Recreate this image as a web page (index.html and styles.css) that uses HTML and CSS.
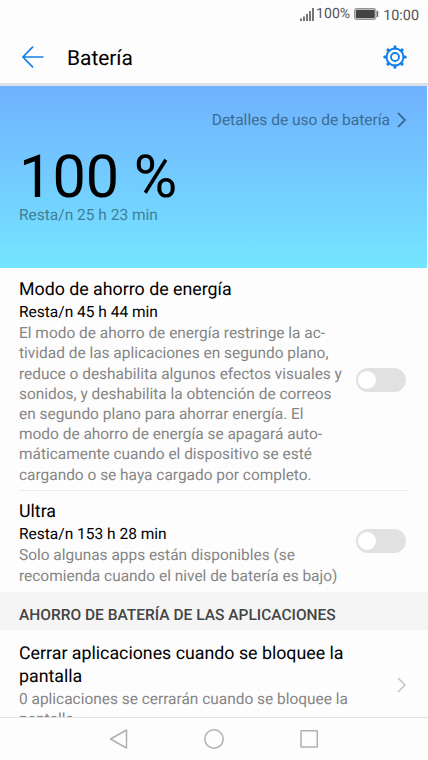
FILE: index.html
```html
<!DOCTYPE html>
<html lang="es">
  <head>
    <meta charset="UTF-8" />
    <meta name="viewport" content="width=device-width, initial-scale=1.0" />
    <title>Batería</title>
    <link rel="stylesheet" href="styles.css">
  </head>
  <body>
    <div class="phone">
      <div class="status-bar">
        <svg class="signal" width="14" height="13" viewBox="0 0 14 13" stroke="#555" stroke-width="1.6">
          <path d="M1 10.5V13M4 8.5V13M7 6V13M10 3V13M13 0V13" />
        </svg>
        <span class="percent">100%</span>
        <svg class="battery" width="25" height="12" viewBox="0 0 25 12">
          <rect x="0.6" y="0.6" width="21.3" height="10.8" rx="1.6" fill="none" stroke="#888" />
          <rect x="1.7" y="1.7" width="19.1" height="8.6" fill="#444" />
          <rect x="22.7" y="3" width="1.5" height="6" rx="0.5" fill="#666" />
        </svg>
        <span class="clock">10:00</span>
      </div>

      <header class="header">
        <svg class="back" width="22" height="22" viewBox="0 0 22 22" fill="none" stroke="#147fe8" stroke-width="1.7">
          <path d="M21.5 11H1M11 .7L.9 11L11 21.3" />
        </svg>
        <h1>Batería</h1>
        <svg class="gear" width="24" height="24" viewBox="-12 -12 24 24" fill="none" stroke="#0f7fec">
          <circle r="8.5" stroke-width="1.9" />
          <circle r="4" stroke-width="1.8" />
          <path stroke-width="3" stroke-linecap="round" d="M0-9.1V-10.3M0 9.1V10.3M-9.1 0H-10.3M9.1 0H10.3M6.5-6.5L7.1-7.1M6.5 6.5L7.1 7.1M-6.5-6.5L-7.1-7.1M-6.5 6.5L-7.1 7.1" />
        </svg>
      </header>

      <section class="hero">
        <div class="details">
          <span>Detalles de uso de batería</span>
          <svg width="10" height="16" viewBox="0 0 10 16" fill="none" stroke="#3d6b91" stroke-width="1.8">
            <path d="M1 1L8 8L1 15" />
          </svg>
        </div>
        <div class="level">100 %</div>
        <div class="remaining">Resta/n 25 h 23 min</div>
      </section>

      <main class="content">
        <div class="item saver">
          <div class="text">
            <h2>Modo de ahorro de energía</h2>
            <h3>Resta/n 45 h 44 min</h3>
            <p>El modo de ahorro de energía restringe la ac-<br>tividad de las aplicaciones en segundo plano,<br>reduce o deshabilita algunos efectos visuales y<br>sonidos, y deshabilita la obtención de correos<br>en segundo plano para ahorrar energía. El<br>modo de ahorro de energía se apagará auto-<br>máticamente cuando el dispositivo se esté<br>cargando o se haya cargado por completo.</p>
          </div>
          <div class="switch"></div>
        </div>
        <div class="item ultra">
          <div class="text">
            <h2>Ultra</h2>
            <h3>Resta/n 153 h 28 min</h3>
            <p>Solo algunas apps están disponibles (se<br>recomienda cuando el nivel de batería es bajo)</p>
          </div>
          <div class="switch"></div>
        </div>
        <div class="section-title">AHORRO DE BATERÍA DE LAS APLICACIONES</div>
        <div class="item apps">
          <div class="text">
            <h2>Cerrar aplicaciones cuando se bloquee la<br>pantalla</h2>
            <p>0 aplicaciones se cerrarán cuando se bloquee la<br>pantalla</p>
          </div>
          <svg class="chevron" width="10" height="16" viewBox="0 0 10 16" fill="none" stroke="#c4c4c4" stroke-width="1.5">
            <path d="M1 1L8 8L1 15" />
          </svg>
        </div>
      </main>

      <nav class="nav-bar">
        <svg width="20" height="22" viewBox="0 0 20 22"><path d="M17.5 2V20L1.5 11Z" /></svg>
        <svg width="22" height="22" viewBox="0 0 22 22"><circle cx="11" cy="11" r="9.2" /></svg>
        <svg width="20" height="22" viewBox="0 0 20 22"><rect x="2" y="2.7" width="16.3" height="16.3" rx="0.5" /></svg>
      </nav>
    </div>
  </body>
</html>
```
FILE: styles.css
```css
* {
    box-sizing: border-box;
}

body {
    margin: 0;
    font-family: Roboto, sans-serif;
    text-rendering: geometricPrecision;
    background-color: #fdfdfd;
    color: #000;
}

h1, h2, h3, p {
    margin: 0;
    font-weight: 400;
}

svg {
    display: block;
    flex-shrink: 0;
}

.phone {
    width: 428px;
    height: 760px;
    display: flex;
    flex-direction: column;
    overflow: hidden;
}

.status-bar {
    height: 28px;
    flex-shrink: 0;
    display: flex;
    align-items: center;
    justify-content: flex-end;
    padding-right: 9px;
    font-size: 14.4px;
    color: #555;
}

.signal {
    margin-right: 2px;
}

.percent {
    font-size: 14.1px;
}

.battery {
    margin: 0 4px;
}

.clock {
    padding-top: 2px;
}

.header {
    height: 58px;
    flex-shrink: 0;
    display: flex;
    align-items: center;
    padding: 3px 21px 0 22px;
    border-bottom: 3px solid #dce3e8;
}

.header h1 {
    flex: 1;
    margin-left: 23px;
    padding-top: 4px;
    font-size: 20.9px;
}

.hero {
    height: 182px;
    flex-shrink: 0;
    padding: 24px 20px 0 19px;
    margin-right: 1px;
    background: linear-gradient(#70b1ff, #75e5ff);
}

.details {
    display: flex;
    align-items: center;
    justify-content: flex-end;
    gap: 7px;
    font-size: 15.5px;
    line-height: 20px;
    color: #3d6b91;
}

.details svg {
    margin-top: -1px;
}

.level {
    margin-top: 15px;
    font-size: 59.4px;
    line-height: 64px;
}

.remaining {
    margin-top: -4px;
    font-size: 15.5px;
    line-height: 20px;
    color: #3f7f98;
}

.content {
    flex: 1;
    min-height: 0;
    overflow: hidden;
}

.item {
    display: flex;
    align-items: center;
    justify-content: space-between;
    margin: 0 19px;
}

.item h2 {
    font-size: 17.8px;
    line-height: 23px;
}

.item h3 {
    font-size: 15.5px;
    line-height: 22px;
}

.item p {
    font-size: 15.45px;
    line-height: 20.2px;
    color: #858585;
    white-space: nowrap;
}

.saver {
    height: 223px;
    padding: 10px 3.5px 5px 0;
    border-bottom: 1px solid #ebebeb;
}

.ultra {
    height: 101px;
    padding: 3px 3.5px 0 0;
}

.switch {
    width: 50px;
    height: 24px;
    margin-bottom: 4px;
    padding: 3px 2px;
    flex-shrink: 0;
    border-radius: 12px;
    background-color: #e1e1e1;
}

.switch::before {
    content: "";
    display: block;
    width: 18px;
    height: 18px;
    border-radius: 50%;
    background-color: #fff;
}

.section-title {
    height: 38px;
    padding: 5px 19px 0;
    background-color: #f5f5f5;
    color: #444;
    font-size: 15.5px;
    font-weight: 500;
    line-height: 36px;
}

.apps {
    padding: 12px 2px 12px 0;
}

.apps h2 {
    padding-bottom: 1px;
}

.chevron {
    margin-bottom: 2px;
}

.nav-bar {
    height: 43px;
    flex-shrink: 0;
    display: flex;
    justify-content: space-between;
    padding: 10px 109px 0 109px;
    border-top: 1px solid #e3e3e3;
}

.nav-bar svg {
    fill: none;
    stroke: #b0b0b0;
    stroke-width: 1.5;
    stroke-linejoin: round;
}
```
